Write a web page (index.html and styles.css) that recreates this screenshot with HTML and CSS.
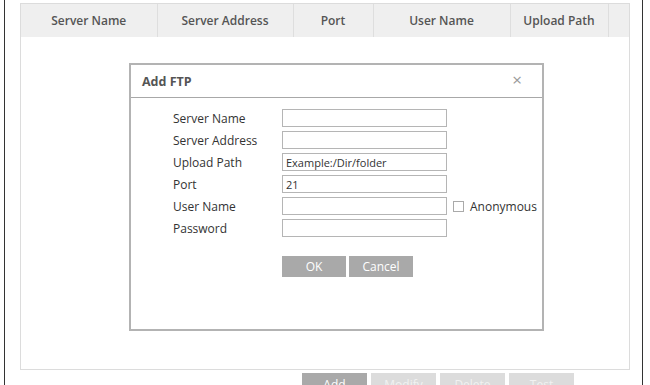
FILE: index.html
```html
<!DOCTYPE html>
<html lang="en">
  <head>
    <meta charset="UTF-8" />
    <title>FTP</title>
    <link rel="stylesheet" href="styles.css">
  </head>
  <body>
    <div class="frame">
      <div class="panel">
        <table class="ftp-table">
          <thead>
            <tr>
              <th class="col-name">Server Name</th>
              <th class="col-addr">Server Address</th>
              <th class="col-port">Port</th>
              <th class="col-user">User Name</th>
              <th class="col-path">Upload Path</th>
              <th class="col-rest"></th>
            </tr>
          </thead>
        </table>
      </div>

      <div class="actions">
        <button class="btn btn-dark">Add</button>
        <button class="btn btn-off">Modify</button>
        <button class="btn btn-off">Delete</button>
        <button class="btn btn-off">Test</button>
      </div>

      <!-- dialog over the list -->
      <div class="modal">
        <div class="modal-header">
          <span class="modal-title">Add FTP</span>
          <span class="modal-close">&times;</span>
        </div>
        <div class="modal-body">
          <div class="form-row">
            <label>Server Name</label>
            <input type="text" class="form-control" />
          </div>
          <div class="form-row">
            <label>Server Address</label>
            <input type="text" class="form-control" />
          </div>
          <div class="form-row">
            <label>Upload Path</label>
            <input type="text" class="form-control" value="Example:/Dir/folder" />
          </div>
          <div class="form-row">
            <label>Port</label>
            <input type="text" class="form-control" value="21" />
          </div>
          <div class="form-row">
            <label>User Name</label>
            <input type="text" class="form-control" />
            <span class="check"><span class="check-box"></span>Anonymous</span>
          </div>
          <div class="form-row">
            <label>Password</label>
            <input type="password" class="form-control" />
          </div>
          <div class="modal-buttons">
            <button class="btn btn-dark btn-ok">OK</button>
            <button class="btn btn-dark btn-ok">Cancel</button>
          </div>
        </div>
      </div>
    </div>
  </body>
</html>
```

FILE: styles.css
```css
* {
  margin: 0;
  padding: 0;
  box-sizing: border-box;
  font-family: "Open Sans", "Noto Sans", sans-serif;
}

body {
  background: #fff;
  color: #444;
  width: 650px;
  height: 385px;
  overflow: hidden;
}

.frame {
  position: relative;
  margin-left: 4px;
  width: 639px;
  height: 385px;
  border-left: 1px solid #333;
  border-right: 1px solid #333;
  padding: 3px 0 0 15px;
}

.panel {
  width: 610px;
  height: 367px;
  border: 1px solid #dcdcdc;
}

.ftp-table {
  border-collapse: collapse;
  width: 100%;
  table-layout: fixed;
}

.ftp-table th {
  height: 33px;
  background: #efefef;
  border-right: 1px solid #dedede;
  color: #555;
  font-size: 12px;
  font-weight: 600;
}

.ftp-table th:last-child {
  border-right: none;
}

.col-name { width: 136px; }
.col-addr { width: 136px; }
.col-port { width: 80px; }
.col-user { width: 137px; }
.col-path { width: 98px; }

.actions {
  display: flex;
  gap: 4px;
  margin: 3px 0 0 282px;
}

.btn {
  border: none;
  font-size: 12px;
  color: #fff;
  cursor: pointer;
}

.actions .btn {
  width: 65px;
  height: 22px;
}

.btn-dark {
  background: #a9a9a9;
}

.btn-off {
  background: #dcdcdc;
  color: #f2f2f2;
}

.modal {
  position: absolute;
  left: 124px;
  top: 63px;
  width: 415px;
  height: 268px;
  background: #fff;
  border: 2px solid #b3b3b3;
}

.modal-header {
  display: flex;
  align-items: center;
  justify-content: space-between;
  height: 33px;
  padding: 0 20px 0 11px;
  border-bottom: 1px solid #a8a8a8;
}

.modal-title {
  font-size: 12.5px;
  font-weight: 700;
  color: #555;
}

.modal-close {
  font-size: 17px;
  color: #999;
  margin-top: -3px;
}

.modal-body {
  padding: 9px 0 0 42px;
}

.form-row {
  display: flex;
  align-items: center;
  height: 22px;
  font-size: 12px;
  color: #333;
}

.form-row label {
  width: 109px;
}

.form-control {
  width: 165px;
  height: 18px;
  border: 1px solid #b5b5b5;
  padding: 0 3px;
  font-size: 11px;
  color: #333;
}

.check {
  display: flex;
  align-items: center;
  margin-left: 6px;
  font-size: 12px;
}

.check-box {
  width: 11px;
  height: 11px;
  border: 1px solid #aaa;
  margin-right: 6px;
}

.modal-buttons {
  display: flex;
  gap: 3px;
  margin: 17px 0 0 109px;
}

.btn-ok {
  width: 64px;
  height: 21px;
}
```
